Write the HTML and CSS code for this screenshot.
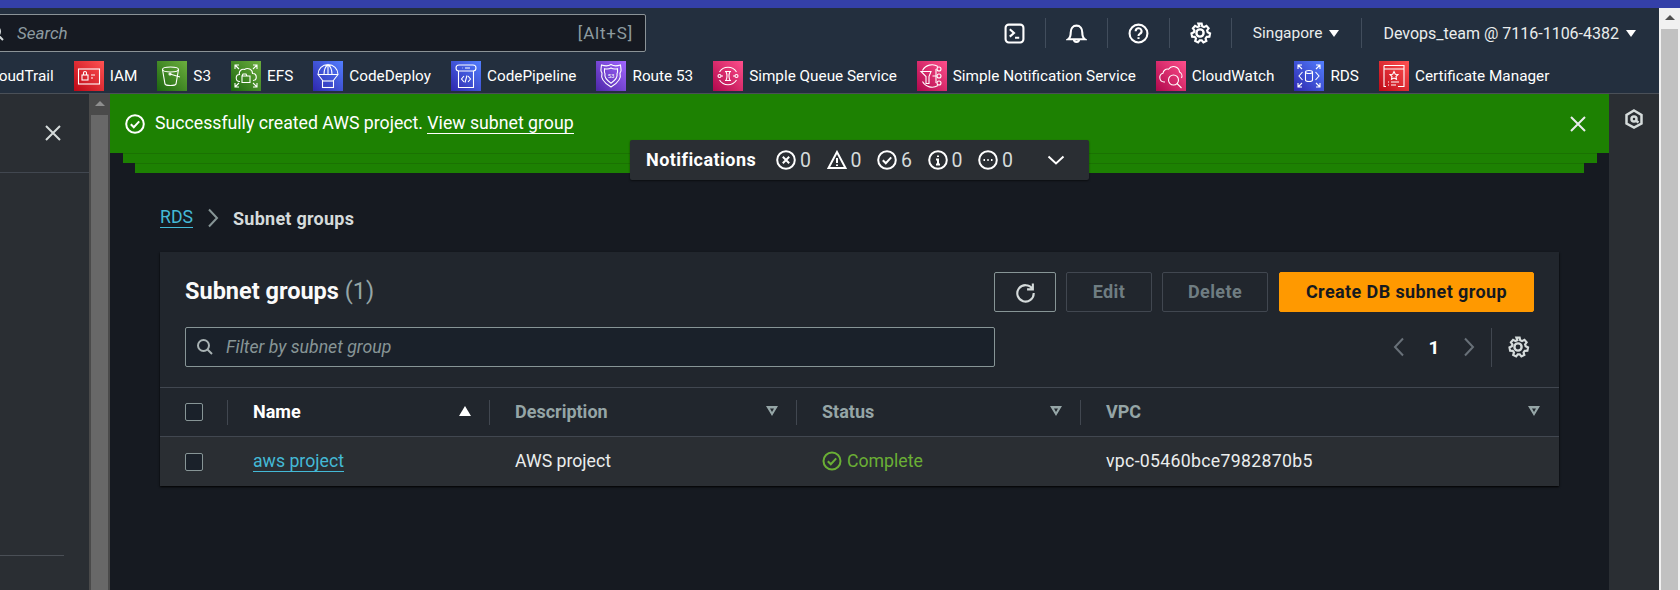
FILE: index.html
```html
<!DOCTYPE html>
<html lang="en">
<head>
<meta charset="UTF-8">
<title>Subnet groups | RDS</title>
<link rel="stylesheet" href="styles.css">
</head>
<body>
<div class="strip"></div>
<div class="frame">
  <div class="page">
    <header class="nav">
      <div class="nav-top">
        <div class="search">
          <svg class="search-icon" viewBox="0 0 18 18"><circle cx="7.5" cy="7.5" r="5.5"/><path d="M11.5 11.5 16 16"/></svg>
          <span class="search-text">Search</span>
          <span class="search-key">[Alt+S]</span>
        </div>
        <div class="nav-tools">
          <span class="tool">
            <svg viewBox="0 0 20 20"><rect x="1.5" y="1.5" width="17" height="17" rx="3"/><path d="m5.5 6 4 3.5-4 3.5M10.5 14h4"/></svg>
          </span>
          <span class="tool">
            <svg viewBox="0 0 20 20"><path d="M2 15.5c2-1.500 2.500-3 2.500-6.500S6.500 2.500 10 2.500 15.500 5.500 15.500 9s.5 5 2.500 6.500zM7.500 15.500a2.500 2.500 0 0 0 5 0"/></svg>
          </span>
          <span class="tool">
            <svg viewBox="0 0 20 20"><circle cx="10" cy="10" r="8.500"/><path d="M7.300 7.800a2.800 2.800 0 1 1 4 2.500c-.9.500-1.300 1-1.300 2M10 13.500v1.800"/></svg>
          </span>
          <span class="tool gear">
            <svg viewBox="0 0 20 20"><circle cx="10" cy="10" r="3"/><path d="M8.500 1.500h3l.5 2.400 1.700.8 2.200-1.200 2 2.300-1.400 2 .5 1.700 2.200 1-.6 3-2.400.1-1.100 1.500.7 2.300-2.700 1.300-1.500-1.900h-1.800l-1.500 1.900-2.700-1.300.7-2.300-1.100-1.500-2.400-.1-.6-3 2.200-1 .5-1.700-1.400-2 2-2.300 2.200 1.200 1.700-.8z" transform="translate(.9 .8) scale(.91)"/></svg>
          </span>
          <span class="nav-menu region">Singapore <i class="caret"></i></span>
          <span class="nav-menu account">Devops_team @ 7116-1106-4382 <i class="caret"></i></span>
        </div>
      </div>
      <div class="bookmarks">
        <a class="mark"><span>CloudTrail</span></a>
        <a class="mark"><span class="tile red"><svg viewBox="0 0 30 30"><rect x="4.500" y="8" width="21" height="15"/><rect x="8" y="14" width="6" height="5"/><path d="M9.500 14v-2a1.500 1.500 0 0 1 3 0v2M17 14h4M17 17h2"/></svg></span><span>IAM</span></a>
        <a class="mark"><span class="tile green"><svg viewBox="0 0 30 30"><ellipse cx="13.500" cy="8.500" rx="8" ry="2.500"/><path d="M5.500 8.500 8 23q.5 1.500 5.500 1.500T19 23l2.500-14.500M13 13l10 3"/><circle cx="13" cy="13" r="1"/></svg></span><span>S3</span></a>
        <a class="mark"><span class="tile green"><svg viewBox="0 0 30 30"><path d="M9 20.500a3.500 3.500 0 0 1-.5-7 4 4 0 0 1 5-5 5 5 0 0 1 8 4 3.500 3.500 0 0 1 .5 7"/><path d="M11 15h8v6.500h-8zM11 15l1-2h3l1 2M4 8V4h4M4 4l4 4M26 8V4h-4M26 4l-4 4M4 22v4h4M4 26l4-4M26 22v4h-4M26 26l-4-4"/></svg></span><span>EFS</span></a>
        <a class="mark"><span class="tile blue"><svg viewBox="0 0 30 30"><path d="M5 13.500a10 10 0 0 1 20 0zM5 13.500l5 6.500M25 13.500 20 20M11 13.500q0-7 4-10 4 3 4 10M15 3.500v10"/><rect x="9.500" y="20" width="11" height="6.500"/></svg></span><span>CodeDeploy</span></a>
        <a class="mark"><span class="tile blue"><svg viewBox="0 0 30 30"><path d="M7.500 10v16.500h15V10"/><rect x="5" y="4" width="20" height="6" rx="3"/><path d="M11 7h.5M14 7h5M13 15l-2.500 3 2.500 3M17 15l2.500 3-2.500 3M16 14.500l-2 7"/></svg></span><span>CodePipeline</span></a>
        <a class="mark"><span class="tile purple"><svg viewBox="0 0 30 30"><path d="M15 3.500c3 2 5 2 9.500.5.800 6 .8 6-.5 8 1.500 5-2 10-9 14-7-4-10.500-9-9-14-1.300-2-1.300-2-.5-8C10 5.500 12 5.500 15 3.500z"/><path d="M15 7c2 1.200 3.500 1.300 6.500.7.300 2.800.3 3.500-.5 5 .8 3.500-1.500 6.500-6 9.500-4.500-3-6.800-6-6-9.500-.8-1.500-.8-2.200-.5-5 3 .6 4.500.5 6.500-.7z"/><text x="15" y="17" class="tile-num">53</text></svg></span><span>Route 53</span></a>
        <a class="mark"><span class="tile pink"><svg viewBox="0 0 30 30"><path d="M6.500 11a10 10 0 0 1 17 0M6.500 19a10 10 0 0 0 17 0M12 10.500h6M12 19.500h6M13 10.500q2 4.500 0 9M17 10.500q-2 4.500 0 9"/><circle cx="6.500" cy="15" r="1.500"/><circle cx="23.500" cy="15" r="1.500"/><path d="M8 15h2M20 15h2"/></svg></span><span>Simple Queue Service</span></a>
        <a class="mark"><span class="tile pink"><svg viewBox="0 0 30 30"><path d="M21 5.500A11 11 0 0 0 5.500 9.500M21 24.500A11 11 0 0 1 5.500 20.500M4 10.500h10l-2 5v7H9v-7zM15.500 15h4"/><rect x="20" y="6" width="4" height="4" rx="2"/><rect x="20" y="13" width="4" height="4" rx="2"/><rect x="20" y="20" width="4" height="4" rx="2"/><path d="M19 8v14"/></svg></span><span>Simple Notification Service</span></a>
        <a class="mark"><span class="tile pink"><svg viewBox="0 0 30 30"><path d="M9 21H8a4.500 4.500 0 0 1-1-8.800 4.500 4.500 0 0 1 5.500-4A6 6 0 0 1 23.500 11a4.500 4.500 0 0 1 2 6"/><circle cx="17.500" cy="19" r="5"/><path d="m21 22.500 4.500 4.500"/></svg></span><span>CloudWatch</span></a>
        <a class="mark"><span class="tile blue"><svg viewBox="0 0 30 30"><ellipse cx="15" cy="11" rx="3.500" ry="1.500"/><path d="M11.500 11v8q0 1.500 3.500 1.500t3.500-1.500v-8M8.500 11 5 15l3.500 4M21.500 11l3.500 4-3.500 4M4 8V4h4M4 4l4 4M26 8V4h-4M26 4l-4 4M4 22v4h4M4 26l4-4M26 22v4h-4M26 26l-4-4"/></svg></span><span>RDS</span></a>
        <a class="mark"><span class="tile red"><svg viewBox="0 0 30 30"><path d="M5 4.500h20v21H19M5 4.500v21h2M5 8h20M15 10.500l1.300 2.700 2.700.3-2 2 .5 2.800-2.500-1.300-2.500 1.300.5-2.800-2-2 2.700-.3zM9 21h1M12 21h8M9 24h1M12 24h5"/></svg></span><span>Certificate Manager</span></a>
      </div>
    </header>
    <div class="body">
      <aside class="side">
        <div class="side-head">
          <svg class="close" viewBox="0 0 18 18"><path d="m2 2 14 14M16 2 2 16"/></svg>
        </div>
        <div class="side-rule"></div>
      </aside>
      <div class="side-bar">
        <i class="bar-up"></i>
        <i class="bar-thumb"></i>
      </div>
      <main class="main">
        <div class="flash">
          <svg class="flash-ok" viewBox="0 0 20 20"><circle cx="10" cy="10" r="8.800"/><path d="m5.800 10.200 3 3 5.400-5.800"/></svg>
          <span>Successfully created AWS project. <a class="flash-link">View subnet group</a></span>
          <svg class="flash-close" viewBox="0 0 18 18"><path d="m2 2 14 14M16 2 2 16"/></svg>
        </div>
        <div class="flash-under one"></div>
        <div class="flash-under two"></div>

        <div class="notes">
          <b class="notes-title">Notifications</b>
          <span class="note"><svg viewBox="0 0 20 20"><circle cx="10" cy="10" r="8.800"/><path d="m6.800 6.800 6.400 6.400M13.200 6.800l-6.400 6.400"/></svg>0</span>
          <span class="note"><svg viewBox="0 0 20 20"><path d="M10 2 1.500 18h17zM10 8v5M10 14.500v1.500"/></svg>0</span>
          <span class="note"><svg viewBox="0 0 20 20"><circle cx="10" cy="10" r="8.800"/><path d="m5.800 10.200 3 3 5.400-5.800"/></svg>6</span>
          <span class="note"><svg viewBox="0 0 20 20"><circle cx="10" cy="10" r="8.800"/><path d="M10 5.500v1.500M8 9.500h2v5M8 14.500h4"/></svg>0</span>
          <span class="note"><svg viewBox="0 0 20 20"><circle cx="10" cy="10" r="8.800"/><path d="M5.500 10H7M9.300 10h1.400M13 10h1.500"/></svg>0</span>
          <svg class="notes-open" viewBox="0 0 18 10"><path d="m1.500 1.500 7.500 7 7.500-7"/></svg>
        </div>

        <nav class="crumbs">
          <a class="crumb-link">RDS</a>
          <svg class="crumb-sep" viewBox="0 0 12 20"><path d="m2 1.500 8 8.500-8 8.500"/></svg>
          <b class="crumb-now">Subnet groups</b>
        </nav>

        <section class="card">
          <div class="card-head">
            <div class="card-row">
              <h2>Subnet groups <span class="count">(1)</span></h2>
              <div class="actions">
                <button class="btn refresh" type="button"><svg viewBox="0 0 20 20"><path d="M16.500 6.500a7.800 7.800 0 1 0 1.300 4M17 1.500v5.500h-5.500"/></svg></button>
                <button class="btn off edit" type="button">Edit</button>
                <button class="btn off delete" type="button">Delete</button>
                <button class="btn primary" type="button">Create DB subnet group</button>
              </div>
            </div>
            <div class="card-row second">
              <div class="filter">
                <svg viewBox="0 0 18 18"><circle cx="7.500" cy="7.500" r="5.500"/><path d="M11.500 11.500 16 16"/></svg>
                <span>Filter by subnet group</span>
              </div>
              <div class="pager">
                <svg class="pager-arrow" viewBox="0 0 12 20"><path d="M10 1.500 2 10l8 8.500"/></svg>
                <b>1</b>
                <svg class="pager-arrow" viewBox="0 0 12 20"><path d="m2 1.500 8 8.500-8 8.500"/></svg>
                <i class="pager-rule"></i>
                <svg class="pager-gear" viewBox="0 0 20 20"><circle cx="10" cy="10" r="3"/><path d="M8.500 1.500h3l.5 2.400 1.700.8 2.200-1.200 2 2.300-1.400 2 .5 1.700 2.200 1-.6 3-2.400.1-1.100 1.500.7 2.300-2.700 1.300-1.500-1.900h-1.800l-1.500 1.900-2.700-1.300.7-2.300-1.100-1.500-2.400-.1-.6-3 2.200-1 .5-1.700-1.400-2 2-2.300 2.200 1.200 1.700-.8z" transform="translate(.9 .8) scale(.91)"/></svg>
              </div>
            </div>
          </div>
          <div class="tr th">
            <div class="cell check"><i class="box"></i></div>
            <div class="cell sorted">Name <i class="sort-up"></i></div>
            <div class="cell">Description <i class="sort-down"></i></div>
            <div class="cell">Status <i class="sort-down"></i></div>
            <div class="cell last">VPC <i class="sort-down"></i></div>
          </div>
          <div class="tr td">
            <div class="cell check"><i class="box"></i></div>
            <div class="cell"><a class="row-link">aws project</a></div>
            <div class="cell">AWS project</div>
            <div class="cell status"><svg viewBox="0 0 20 20"><circle cx="10" cy="10" r="8.500"/><path d="m5.800 10.200 3 3 5.400-5.800"/></svg>Complete</div>
            <div class="cell vpc">vpc-05460bce7982870b5</div>
          </div>
        </section>
      </main>
      <aside class="rail">
        <svg viewBox="0 0 20 20"><path d="M10 1.500 17.500 6v8.500L10 18.500 2.500 14.500V6z"/><circle cx="10" cy="10" r="2.500"/><path d="m11.500 11.500 3 2"/></svg>
      </aside>
    </div>
  </div>
  <div class="page-bar">
    <i class="page-up"></i>
    <i class="page-thumb"></i>
  </div>
</div>
</body>
</html>
```

FILE: styles.css
```css
* {
  box-sizing: border-box;
}

html, body {
  height: 100%;
}

body {
  margin: 0;
  overflow: hidden;
  display: flex;
  flex-direction: column;
  background: #161a21;
  color: #d5dbdb;
  font-family: Roboto, sans-serif;
  font-size: 17.700px;
}

svg {
  fill: none;
  stroke: currentColor;
  flex: none;
  display: block;
}

button {
  font: inherit;
}

.strip {
  height: 8px;
  background: #3440a8;
}

.frame {
  flex: 1;
  display: flex;
  min-height: 0;
}

.page {
  flex: 1;
  min-width: 0;
  display: flex;
  flex-direction: column;
}

/* top nav */
.nav {
  height: 86px;
  background: #232f3e;
  border-bottom: 1px solid #4a5058;
  flex: none;
  overflow: hidden;
}

.nav-top {
  height: 53px;
  display: flex;
  align-items: flex-start;
  justify-content: space-between;
  padding-top: 6px;
}

.search {
  width: 660px;
  height: 38px;
  margin-left: -14px;
  padding: 0 12px 0 0;
  display: flex;
  align-items: center;
  background: #161a22;
  border: 1px solid #8b9397;
  border-radius: 2px;
  color: #8d9ba0;
  font-size: 17px;
}

.search-icon {
  width: 18px;
  height: 18px;
  margin-right: 12px;
  stroke: #d5dbdb;
  stroke-width: 2;
}

.search-text {
  font-style: italic;
  flex: 1;
}

.search-key {
  letter-spacing: .8px;
}

.nav-tools {
  display: flex;
  align-items: center;
  margin-top: 4px;
  color: #eaeded;
  font-size: 15.500px;
}

.tool {
  width: 62px;
  height: 30px;
  display: flex;
  align-items: center;
  justify-content: center;
  border-right: 1px solid #414d5c;
}

.tool svg {
  width: 21px;
  height: 21px;
  stroke: #fff;
  stroke-width: 2;
}

.tool.gear svg {
  width: 24px;
  height: 24px;
}

.nav-menu {
  height: 30px;
  display: flex;
  align-items: center;
  gap: 7px;
  white-space: nowrap;
}

.region {
  padding: 0 22px 0 21px;
  border-right: 1px solid #414d5c;
}

.account {
  padding: 0 23px 0 21px;
  font-size: 16px;
}

.caret {
  width: 0;
  height: 0;
  border-left: 5px solid transparent;
  border-right: 5px solid transparent;
  border-top: 7px solid #fff;
}

.bookmarks {
  height: 32px;
  margin-left: -15px;
  display: flex;
  align-items: flex-start;
  gap: 20px;
  font-size: 15.300px;
  color: #fff;
  white-space: nowrap;
}

.mark {
  display: flex;
  align-items: center;
  gap: 6px;
  height: 30px;
}

.tile {
  width: 30px;
  height: 30px;
  display: block;
}

.tile svg {
  width: 30px;
  height: 30px;
  stroke: #fff;
  stroke-width: 1.100;
}

.tile-num {
  font-size: 6px;
  fill: #fff;
  stroke: none;
  text-anchor: middle;
}

.red { background: linear-gradient(45deg, #bd0816, #ff5252); }
.green { background: linear-gradient(45deg, #1b660f, #6cae3e); }
.blue { background: linear-gradient(45deg, #2e27ad, #527fff); }
.purple { background: linear-gradient(45deg, #4d27a8, #a166ff); }
.pink { background: linear-gradient(45deg, #b0084d, #ff4f8b); }

/* page body */
.body {
  flex: 1;
  min-height: 0;
  display: flex;
}

.side {
  width: 89px;
  flex: none;
  background: #2a2e33;
  display: flex;
  flex-direction: column;
}

.side-head {
  height: 79px;
  border-bottom: 1px solid #414750;
  padding: 30px 0 0 44px;
}

.close {
  width: 18px;
  height: 18px;
  stroke: #d5dbdb;
  stroke-width: 2;
}

.side-rule {
  width: 64px;
  margin-top: 382px;
  border-top: 1px solid #4a4f56;
}

.side-bar {
  width: 21px;
  flex: none;
  padding: 7px 2px 0;
  background: #4a4a4a;
  display: flex;
  flex-direction: column;
  align-items: center;
}

.bar-up {
  width: 0;
  height: 0;
  border-left: 5px solid transparent;
  border-right: 5px solid transparent;
  border-bottom: 5px solid #8e8e8e;
}

.bar-thumb {
  align-self: stretch;
  flex: 1;
  margin-top: 9px;
  background: #686868;
}

.main {
  flex: 1;
  min-width: 0;
  position: relative;
}

.flash {
  height: 59px;
  padding: 0 22px 0 15px;
  display: flex;
  align-items: center;
  gap: 10px;
  background: #1d8102;
  color: #fff;
}

.flash-ok {
  width: 20px;
  height: 20px;
  stroke-width: 2;
}

.flash > span {
  flex: 1;
  padding-bottom: 2px;
}

.flash-link {
  border-bottom: 1px solid #fff;
}

.flash-close {
  width: 18px;
  height: 18px;
  stroke: #eaeded;
  stroke-width: 2;
}

.flash-under {
  height: 10px;
  background: #1d8102;
  border-top: 1px solid #1a7202;
}

.flash-under.one {
  margin: 0 12px 0 13px;
}

.flash-under.two {
  margin: 0 25px 0 25px;
}

.notes {
  position: absolute;
  left: 520px;
  top: 46px;
  width: 459px;
  height: 40px;
  padding: 0 24px 0 16px;
  display: flex;
  align-items: center;
  background: #2a2e33;
  border-radius: 2px;
  box-shadow: 0 1px 2px rgba(0, 0, 0, .5);
  color: #fff;
}

.notes-title {
  width: 130px;
  font-size: 18px;
  letter-spacing: .45px;
  padding-bottom: 2px;
}

.note {
  width: 50.500px;
  display: flex;
  align-items: center;
  gap: 4px;
  color: #d5dbdb;
  font-size: 19.500px;
}

.note svg {
  width: 20px;
  height: 20px;
  stroke: #fff;
  stroke-width: 2;
}

.notes-open {
  width: 18px;
  height: 10px;
  margin-left: 18px;
  stroke: #fff;
  stroke-width: 2;
}

.crumbs {
  margin: 35px 0 0 50px;
  height: 20px;
  display: flex;
  align-items: center;
  gap: 14px;
}

.crumb-link {
  color: #44b9d6;
  border-bottom: 1px solid #44b9d6;
  line-height: 19px;
}

.crumb-now {
  font-size: 18px;
  letter-spacing: .25px;
}

.crumb-sep {
  width: 12px;
  height: 20px;
  stroke: #879596;
  stroke-width: 2;
}

/* table card */
.card {
  margin: 24px 50px 0;
  background: #21262d;
  box-shadow: 0 1px 2px #000;
}

.card-head {
  height: 135px;
  padding: 20px 25px;
}

.card-row {
  display: flex;
  align-items: center;
  justify-content: space-between;
  height: 40px;
}

.card-row.second {
  margin-top: 15px;
}

h2 {
  margin: 0 0 3px;
  font-size: 23.500px;
  font-weight: 700;
  color: #fafafa;
}

.count {
  font-weight: 400;
  color: #95a5a6;
}

.actions {
  display: flex;
  gap: 10px;
}

.btn {
  height: 40px;
  padding: 0 0 2px;
  border: 1px solid #414750;
  border-radius: 2px;
  background: transparent;
  font-weight: 700;
  font-size: 18px;
  letter-spacing: .4px;
  display: flex;
  align-items: center;
  justify-content: center;
}

.refresh {
  width: 62px;
  padding: 0;
  border-color: #879596;
  color: #d5dbdb;
}

.refresh svg {
  width: 21px;
  height: 21px;
  stroke-width: 2;
}

.off {
  color: #6f7d82;
}

.edit {
  width: 86px;
}

.delete {
  width: 106px;
}

.primary {
  width: 255px;
  margin-left: 1px;
  background: #ff9900;
  border-color: #ff9900;
  color: #16191f;
}

.filter {
  width: 810px;
  height: 40px;
  padding: 0 10px;
  display: flex;
  align-items: center;
  gap: 12px;
  background: #1a212a;
  border: 1px solid #879596;
  border-radius: 2px;
  color: #879596;
  font-style: italic;
}

.filter svg {
  width: 18px;
  height: 18px;
  stroke: #a8b2b3;
  stroke-width: 2;
}

.pager {
  display: flex;
  align-items: center;
  height: 40px;
}

.pager b {
  width: 58px;
  text-align: center;
  color: #fff;
  font-size: 19px;
}

.pager-arrow {
  width: 12px;
  height: 20px;
  stroke: #687078;
  stroke-width: 2;
}

.pager-rule {
  width: 1px;
  height: 39px;
  margin: 0 14px 0 16px;
  background: #414750;
}

.pager-gear {
  width: 24px;
  height: 24px;
  margin-right: 4px;
  stroke: #d5dbdb;
  stroke-width: 2;
}

.tr {
  display: grid;
  grid-template-columns: 68px 262px 307px 284px 1fr;
  border-top: 1px solid #414750;
}

.cell {
  height: 100%;
  display: flex;
  align-items: center;
  padding-left: 25px;
  padding-bottom: 2px;
}

.th {
  height: 49px;
  font-weight: 700;
  font-size: 18px;
  color: #95a5a6;
}

.th .cell {
  position: relative;
  justify-content: space-between;
  padding-right: 19px;
}

.th .cell:not(.last)::after {
  content: "";
  position: absolute;
  right: 0;
  top: 12px;
  height: 25px;
  width: 1px;
  background: #414750;
}

.sorted {
  color: #fff;
}

.sort-up {
  width: 0;
  height: 0;
  border-left: 6px solid transparent;
  border-right: 6px solid transparent;
  border-bottom: 10px solid #fff;
}

.sort-down {
  width: 12px;
  height: 10px;
  background: #95a5a6;
  clip-path: polygon(0 0, 100% 0, 50% 100%, 0 0, 4px 2.500px, 50% 60%, 8px 2.500px, 4px 2.500px);
}

.check {
  padding-left: 25px;
  padding-bottom: 0;
}

.box {
  width: 18px;
  height: 18px;
  border: 1px solid #879596;
  border-radius: 2px;
  background: #1a212a;
}

.td {
  height: 50px;
  background: #2a2e33;
  color: #eaeded;
}

.vpc {
  letter-spacing: .3px;
}

.row-link {
  margin-top: 2px;
  color: #44b9d6;
  border-bottom: 1px solid #44b9d6;
  line-height: 19px;
}

.status {
  gap: 5px;
  color: #6aaf35;
}

.status svg {
  width: 20px;
  height: 20px;
  stroke-width: 2;
}

.rail {
  width: 50px;
  flex: none;
  background: #2a2e33;
  padding: 15px 0 0 15px;
}

.rail svg {
  width: 20px;
  height: 20px;
  stroke: #d5dbdb;
  stroke-width: 2.500;
}

/* browser scrollbar */
.page-bar {
  width: 21px;
  flex: none;
  padding: 7px 2px 0;
  background: #f1f1f1;
  display: flex;
  flex-direction: column;
  align-items: center;
}

.page-up {
  width: 0;
  height: 0;
  border-left: 5px solid transparent;
  border-right: 5px solid transparent;
  border-bottom: 5px solid #505050;
}

.page-thumb {
  align-self: stretch;
  flex: 1;
  margin-top: 9px;
  background: #c1c1c1;
}
```
